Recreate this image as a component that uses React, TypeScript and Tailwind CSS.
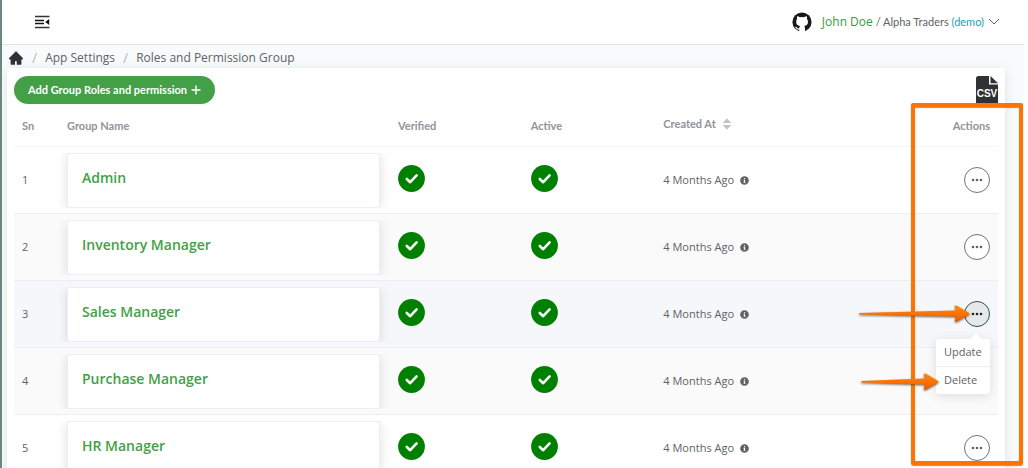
import type { ReactNode } from 'react'
import { AiFillHome } from 'react-icons/ai'
import { FaInfoCircle } from 'react-icons/fa'

const groups = [
  'Admin',
  'Inventory Manager',
  'Sales Manager',
  'Purchase Manager',
  'HR Manager',
]

const openIndex = 2

function rowColor(index: number) {
  if (index === openIndex) return 'bg-[#f5f7fb]'
  return index % 2 ? 'bg-[#fafafa]' : 'bg-white'
}

function HeadCell({
  children,
  className = '',
}: {
  children?: ReactNode
  className?: string
}) {
  return (
    <th
      scope="col"
      className={`h-[41px] border-b border-[#f5f5f7] px-2 text-left font-['Lato',sans-serif] font-bold text-[#909399] ${className}`}
    >
      {children}
    </th>
  )
}

function Cell({
  children,
  className = 'px-2',
}: {
  children: ReactNode
  className?: string
}) {
  return (
    <td className={`h-[67px] border-b border-[#ebeef5] ${className}`}>{children}</td>
  )
}

function MenuFoldIcon() {
  return (
    <svg viewBox="0 0 16 16" className="size-4" aria-hidden="true">
      <path d="M1 2.5H15.5M1 13.5H15.5" stroke="#333" strokeWidth="1.5" />
      <path d="M1 6.5H10M1 9.5H10" stroke="#111" strokeWidth="1.4" />
      <path d="M15.2 5V11L11.2 8Z" fill="#111" />
    </svg>
  )
}

function GithubIcon() {
  return (
    <svg viewBox="0 0 20 20" className="mr-2.5 size-5" aria-hidden="true">
      <circle cx="10" cy="10" r="9.6" fill="#17191c" />
      <path
        d="M5.2 4.2Q6.6 4.2 8 5.2Q10 4.8 12 5.2Q13.4 4.2 14.8 4.2Q15.3 5.4 14.9 6.7Q16 8 16 9.8Q16 13.6 12.2 14.1Q13 14.8 13 16.2V20H7.2V17.6Q5 18 4 16.2Q3.6 15.3 2.8 14.9Q4.4 14.3 5.4 15.9Q6 16.7 7.2 16.3Q7.3 14.8 8 14.1Q4.2 13.6 4.2 9.8Q4.2 8 5.1 6.7Q4.7 5.4 5.2 4.2Z"
        fill="#fff"
      />
    </svg>
  )
}

function CsvIcon() {
  return (
    <svg viewBox="0 0 22 30" className="h-[30px] w-[22px]" aria-hidden="true">
      <path d="M2.5 0H13V8.5H22V27.5Q22 30 19.5 30H2.5Q0 30 0 27.5V2.5Q0 0 2.5 0Z" fill="#303133" />
      <path d="M14.5 0L22 7.2H14.5Z" fill="#303133" />
      <text
        x="11"
        y="21"
        textAnchor="middle"
        fontFamily="Liberation Sans Narrow, Liberation Sans, sans-serif"
        fontSize="10"
        fontWeight="700"
        fill="#fff"
      >
        CSV
      </text>
    </svg>
  )
}

function SortIcon() {
  return (
    <svg viewBox="0 0 10 12" className="ml-1.5 h-3 w-2.5" fill="#c0c4cc" aria-hidden="true">
      <path d="M5 0.5L9.5 5H0.5Z" />
      <path d="M5 11.5L9.5 7H0.5Z" />
    </svg>
  )
}

function Tick({ label }: { label: string }) {
  return (
    <svg viewBox="0 0 27 27" className="mb-1 size-[27px]" fill="none" role="img" aria-label={label}>
      <circle cx="13.5" cy="13.5" r="13.4" fill="#008000" />
      <path
        d="M8.8 14L12.2 17.2L18.6 10.4"
        stroke="#fff"
        strokeWidth="2.6"
        strokeLinecap="round"
        strokeLinejoin="round"
      />
    </svg>
  )
}

function ActionMenu() {
  return (
    <div
      role="menu"
      className="absolute top-full right-0 z-10 mt-3 w-[54px] rounded-[3px] bg-white shadow-[0_2px_12px_rgba(0,0,0,0.12)]"
    >
      <span className="absolute -top-1 right-2.5 size-2 rotate-45 bg-white" />
      <button
        type="button"
        role="menuitem"
        className="relative block h-7 w-full border-b border-[#ebeef5] pl-2 text-left"
      >
        Update
      </button>
      <button type="button" role="menuitem" className="block h-[27px] w-full pl-2 text-left">
        Delete
      </button>
    </div>
  )
}

function RowActions({ name, open }: { name: string; open: boolean }) {
  return (
    <div className="relative ml-auto size-[26px]">
      <button
        type="button"
        aria-label={`Actions for ${name}`}
        aria-expanded={open}
        className={`grid size-full place-items-center rounded-full border ${
          open ? 'border-[#2f5249] bg-[#e5e9e9] text-[#222]' : 'border-[#707276] bg-white text-[#606266]'
        }`}
      >
        <svg viewBox="0 0 12 4" className="h-1 w-3" fill="currentColor" aria-hidden="true">
          <circle cx="2" cy="2" r="1.3" />
          <circle cx="6" cy="2" r="1.3" />
          <circle cx="10" cy="2" r="1.3" />
        </svg>
      </button>
      {open && <ActionMenu />}
    </div>
  )
}

function Arrow({ length, className }: { length: number; className: string }) {
  const neck = length - 14
  return (
    <svg
      width={length}
      height="18"
      viewBox={`0 0 ${length} 18`}
      className={`pointer-events-none absolute z-30 overflow-visible drop-shadow-[0_1px_1px_rgba(90,60,30,0.8)] ${className}`}
      aria-hidden="true"
    >
      <defs>
        <linearGradient id="arrow-fill" x1="0" y1="0" x2="0" y2="1">
          <stop offset="0" stopColor="#ff8a1c" />
          <stop offset="0.5" stopColor="#fb7200" />
          <stop offset="1" stopColor="#e55d00" />
        </linearGradient>
      </defs>
      <path
        d={`M1 8L${neck} 5.5L${neck - 1} 2.5Q${neck - 2} 0 ${neck + 1} 0.8L${length - 1} 8Q${length} 9 ${length - 1} 9.6L${neck + 1} 16.4Q${neck - 2} 17.5 ${neck - 1} 15L${neck} 11.5L1 9.6Q-1 9 1 8Z`}
        fill="url(#arrow-fill)"
      />
    </svg>
  )
}

export default function App() {
  return (
    <div className="relative h-screen overflow-hidden border-r-4 border-l-2 border-r-white border-l-[#6a8782] bg-[#f8fbfc] font-['Open_Sans',sans-serif] text-[11px] text-[#606266]">
      <header className="flex h-[45px] items-center justify-between border-b border-[#e0e3e8] bg-white pr-6 pl-8">
        <button type="button" aria-label="Toggle menu">
          <MenuFoldIcon />
        </button>
        <div className="flex items-center">
          <GithubIcon />
          <div className="font-['Lato',sans-serif]">
            <a href="#profile" className="font-['Open_Sans',sans-serif] text-xs text-[#3c9a3c]">
              John Doe
            </a>{' '}
            / Alpha Traders <span className="text-[#17a2b8]">(demo)</span>
          </div>
          <svg viewBox="0 0 12 12" className="ml-1 size-3" fill="none" aria-hidden="true">
            <path d="M1 3L6 8L11 3" stroke="currentColor" />
          </svg>
        </div>
      </header>

      <nav aria-label="Breadcrumb" className="flex h-[23px] items-center gap-2 pt-0.5 pl-1.5 text-xs">
        <a href="#home" aria-label="Home">
          <AiFillHome className="size-4 text-[#303133]" />
        </a>
        <span className="text-sm text-[#b4b8c0]">/</span>
        <a href="#settings">App Settings</a>
        <span className="text-sm text-[#b4b8c0]">/</span>
        <span>Roles and Permission Group</span>
      </nav>

      <main className="mr-[19px] ml-[5px] rounded-[3px] bg-white px-[7px] pt-2 shadow-[0_2px_12px_rgba(0,0,0,0.1)]">
        <div className="flex items-start justify-between">
          <button
            type="button"
            className="flex h-7 items-center gap-1 rounded-full bg-[#43a047] px-3.5 font-['Lato',sans-serif] font-bold text-white"
          >
            Add Group Roles and permission
            <svg viewBox="0 0 10 10" className="size-2.5" aria-hidden="true">
              <path d="M5 0.5V9.5M0.5 5H9.5" stroke="currentColor" strokeWidth="1.4" />
            </svg>
          </button>
          <button type="button" aria-label="Export CSV">
            <CsvIcon />
          </button>
        </div>

        <table className="w-full table-fixed border-separate border-spacing-0">
          <thead>
            <tr>
              <HeadCell className="w-[45px]">Sn</HeadCell>
              <HeadCell className="w-[331px]">Group Name</HeadCell>
              <HeadCell>Verified</HeadCell>
              <HeadCell>Active</HeadCell>
              <HeadCell className="w-[210px]">
                <span className="flex items-center pb-1">
                  Created At
                  <SortIcon />
                </span>
              </HeadCell>
              <HeadCell className="text-right">Actions</HeadCell>
            </tr>
          </thead>
          <tbody>
            {groups.map((name, i) => (
              <tr key={name} className={rowColor(i)}>
                <Cell>{i + 1}</Cell>
                <Cell className="px-0">
                  <div className="overflow-hidden pr-2.5 pl-2">
                    <div className="h-[55px] rounded-[3px] border border-[#ebeef5] bg-white px-3.5 pt-3.5 text-sm font-semibold text-[#43a047] shadow-[0_2px_12px_rgba(0,0,0,0.12)]">
                      {name}
                    </div>
                  </div>
                </Cell>
                <Cell>
                  <Tick label="Verified" />
                </Cell>
                <Cell>
                  <Tick label="Active" />
                </Cell>
                <Cell>
                  <span className="flex items-center gap-1.5">
                    4 Months Ago
                    <FaInfoCircle className="size-[9px]" />
                  </span>
                </Cell>
                <Cell>
                  <RowActions name={name} open={i === openIndex} />
                </Cell>
              </tr>
            ))}
          </tbody>
        </table>
      </main>

      <div className="pointer-events-none absolute top-[103px] right-px z-20 h-[362px] w-28 rounded-[2px] border-4 border-[#ff7300] shadow-[0_1px_1px_rgba(80,80,80,0.6),inset_0_1px_1px_rgba(80,80,80,0.6)]" />
      <Arrow length={111} className="top-[305px] right-[54px]" />
      <Arrow length={78} className="top-[373px] right-[85px]" />
    </div>
  )
}
